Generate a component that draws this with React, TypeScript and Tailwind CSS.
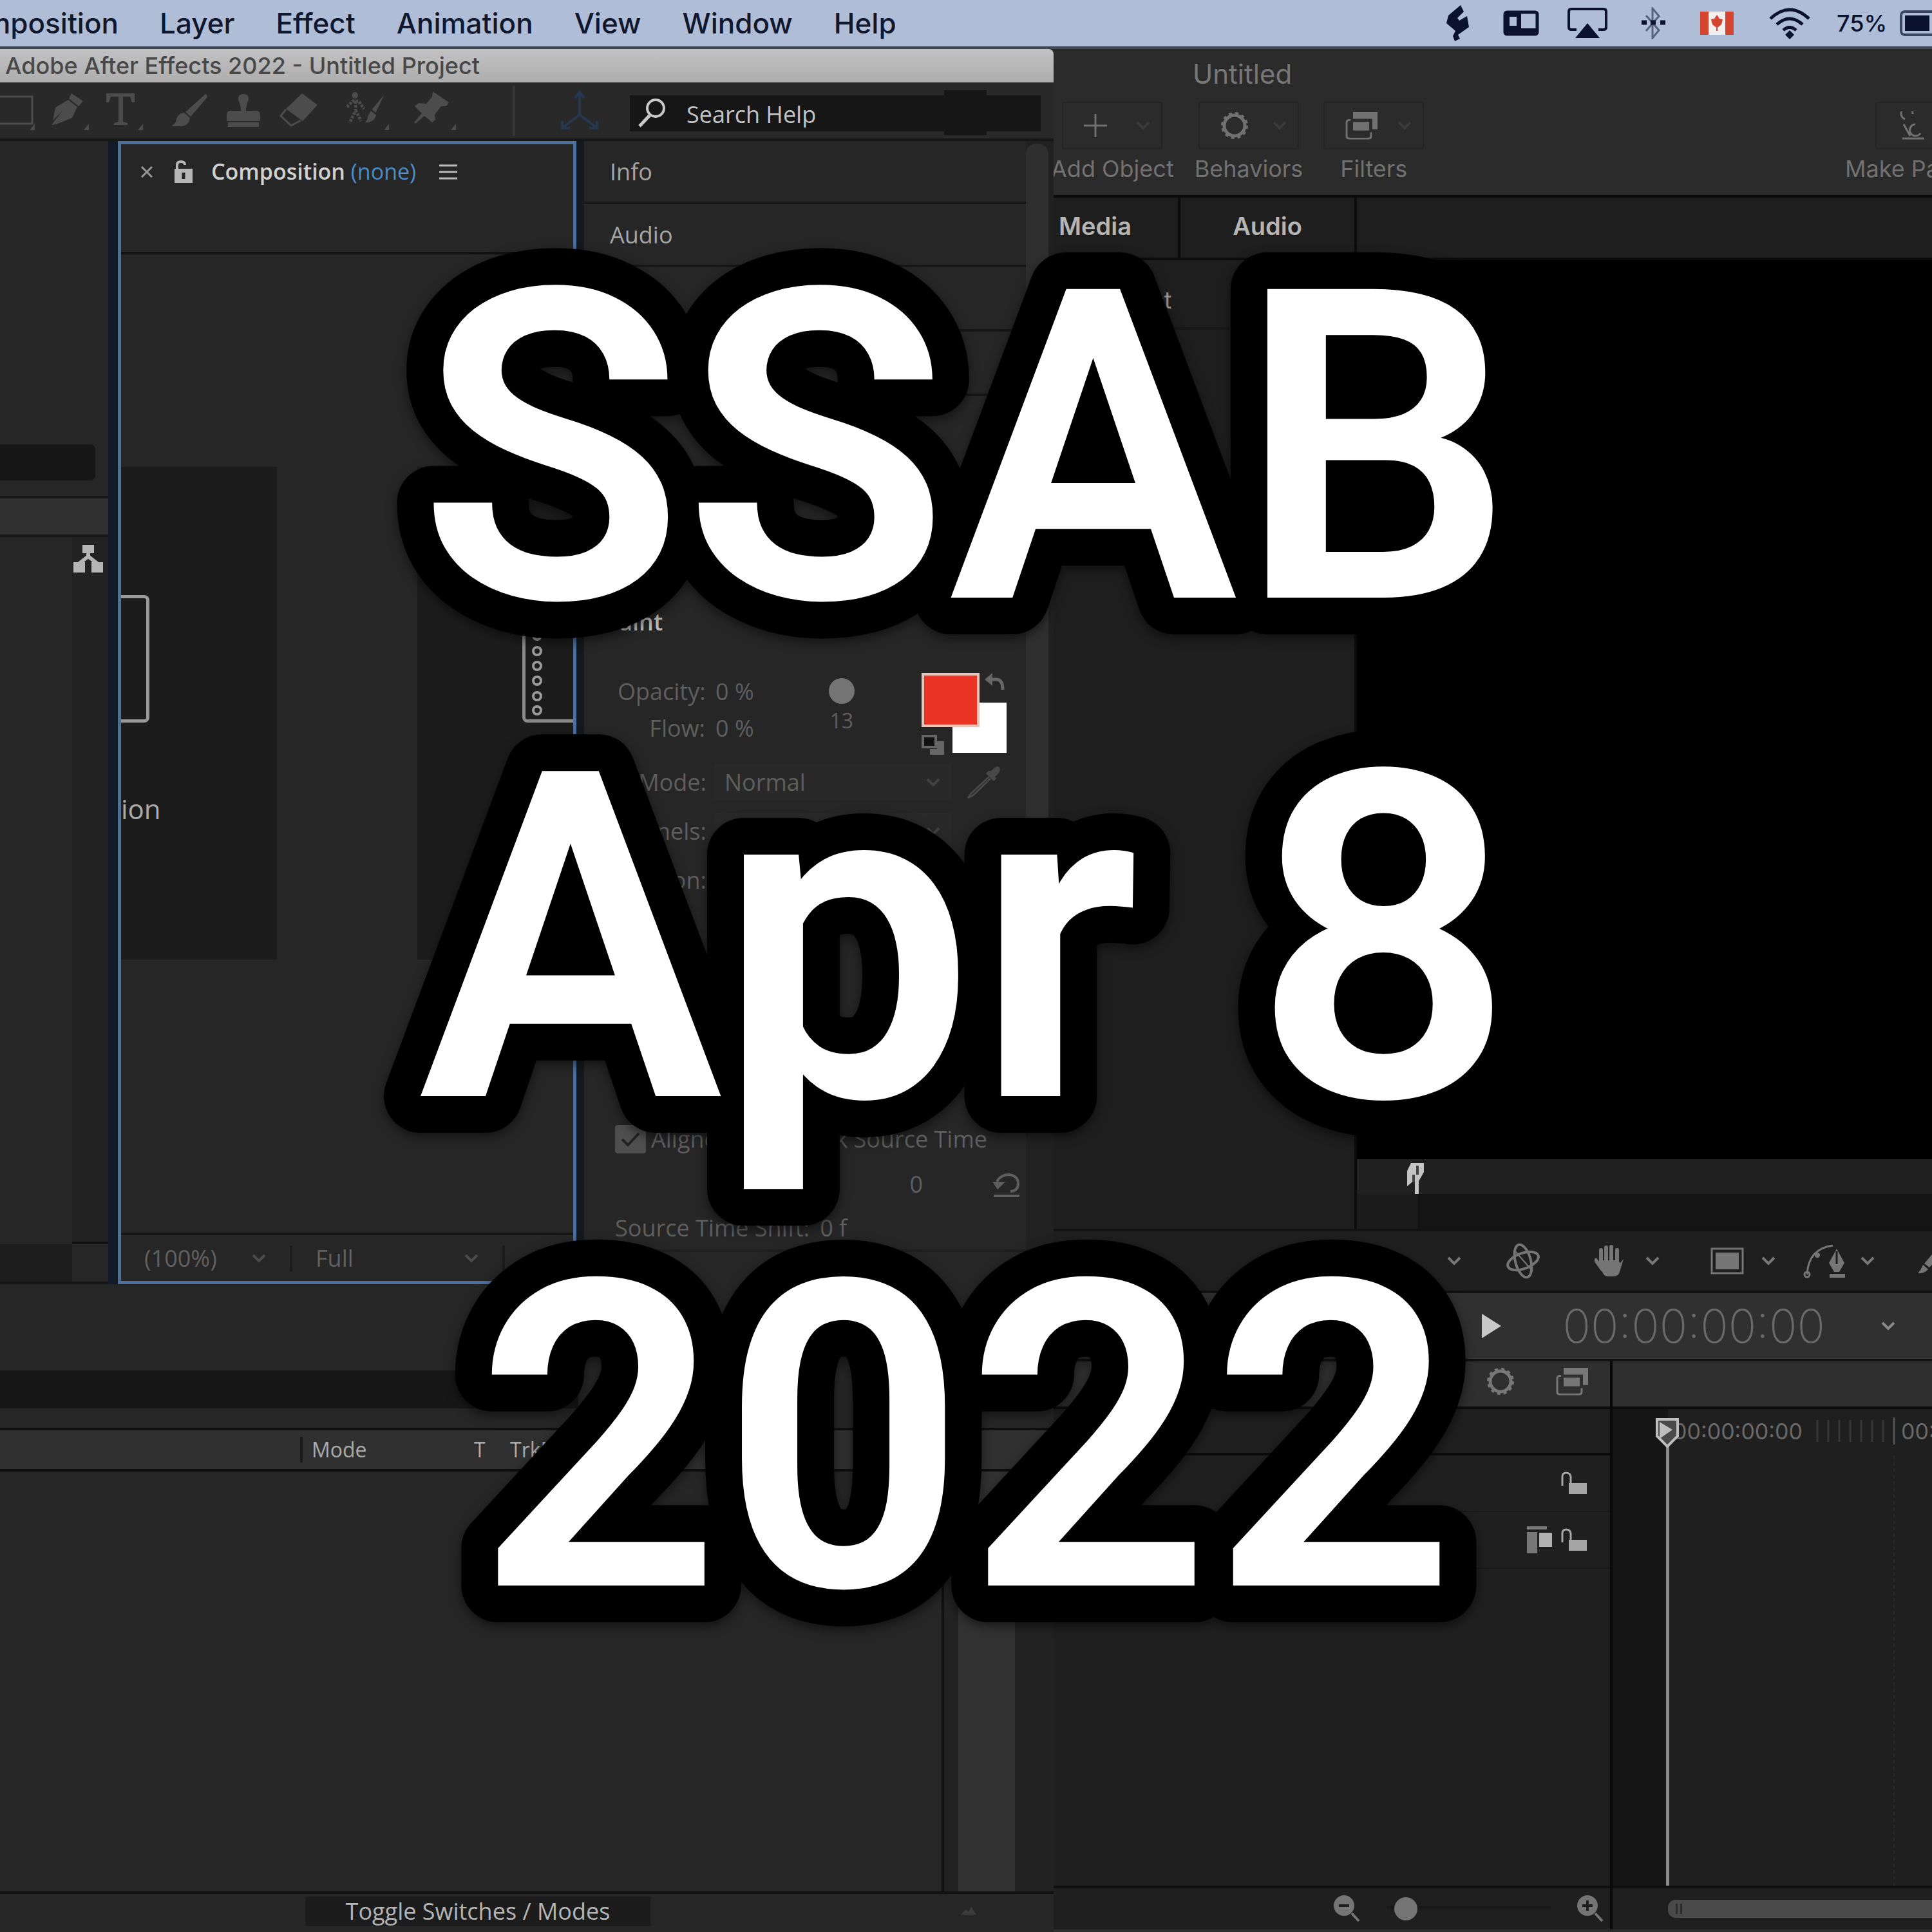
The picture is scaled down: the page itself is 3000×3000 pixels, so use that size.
import type { ReactNode } from "react";

const menus = ["Layer", "Effect", "Animation", "View", "Window", "Help"];

//#region Icons

type IconProps = { className: string; box?: string; children: ReactNode };

function Icon({ className, box = "0 0 24 24", children }: IconProps) {
  return (
    <svg
      aria-hidden="true"
      viewBox={box}
      preserveAspectRatio="none"
      fill="none"
      stroke="currentColor"
      strokeWidth={2}
      className={`shrink-0 ${className}`}
    >
      {children}
    </svg>
  );
}

function Chevron({ className = "text-[#777]" }: { className?: string }) {
  return (
    <Icon className={`w-6 h-4 ${className}`} box="0 0 24 16">
      <path d="M3 3l9 9 9-9" strokeWidth={4} />
    </Icon>
  );
}

function Gear({ className }: { className: string }) {
  return (
    <Icon className={className} box="0 0 44 44">
      <circle cx="22" cy="22" r="16" strokeWidth={5} />
      <circle cx="22" cy="22" r="19" strokeWidth={4} strokeDasharray="5 5" />
    </Icon>
  );
}

function Layers({ className }: { className: string }) {
  return (
    <Icon className={className} box="0 0 52 46">
      <path d="M12 1h38v28h-8V12H12z" fill="currentColor" stroke="none" />
      <path d="M12 17h25v14H12z" fill="currentColor" stroke="none" />
      <path d="M8 14H6q-4 0-4 4v22q0 4 4 4h30q4 0 4-4v-6" strokeWidth={3} />
    </Icon>
  );
}

function OpenLock() {
  return (
    <Icon className="w-10 h-9 text-[#a6a6a6]" box="0 0 40 36">
      <path d="M2 22V8q0-6 6-6t7 6v10" strokeWidth={3} />
      <path d="M12 18h28v17H12z" fill="currentColor" stroke="none" />
    </Icon>
  );
}

function Loupe({ plus = false }: { plus?: boolean }) {
  return (
    <Icon className="w-11 h-11 text-[#757575]" box="0 0 44 44">
      <circle cx="17" cy="17" r="16" fill="currentColor" stroke="none" />
      <path d="M29 29l11 12" strokeWidth={4} />
      <path d="M9 17h16" stroke="#1f1f1f" strokeWidth={4} />
      {plus && <path d="M17 9v16" stroke="#1f1f1f" strokeWidth={4} />}
    </Icon>
  );
}

//#endregion

//#region Menu bar

function MenuBar() {
  return (
    <header className="flex h-[76px] items-center justify-between overflow-hidden border-b-4 border-[#3c485e] bg-[#b0bdd6] text-[44px] text-[#10182f]">
      <nav className="flex items-center gap-16 whitespace-nowrap font-medium font-[Inter,sans-serif]">
        <span className="flex w-[184px] justify-end">
          <a href="#composition">Composition</a>
        </span>
        {menus.map((m) => (
          <a key={m} href={`#${m.toLowerCase()}`}>{m}</a>
        ))}
      </nav>
      <div className="flex shrink-0 items-center text-[#0a1230]">
        <Icon className="mr-[52px] h-14 w-9" box="0 0 36 56">
          <path d="M22 0l5 10-10 10 3 4 12-7 3 17-17 12 3 6-8 4-3-8 4-8L0 28l3-12z" fill="currentColor" stroke="none" />
        </Icon>
        <Icon className="mr-11 h-10 w-14" box="0 0 56 40">
          <rect x="3" y="3" width="50" height="34" rx="3" strokeWidth={5} />
          <path d="M3 3h25v34H3z" fill="currentColor" stroke="none" />
          <path d="M10 10h11v14H10z" fill="#b0bdd6" stroke="none" />
          <path d="M26 28h26v9H26z" fill="currentColor" stroke="none" />
        </Icon>
        <Icon className="mr-[52px] h-12 w-[62px]" box="0 0 62 48">
          <path d="M14 34H6q-4 0-4-4V6q0-4 4-4h50q4 0 4 4v24q0 4-4 4h-8" strokeWidth={4} />
          <path d="M31 24l19 23H12z" fill="currentColor" stroke="none" />
        </Icon>
        <Icon className="mr-[54px] h-[50px] w-[38px] text-[#566280]" box="0 0 38 50">
          <path d="M8 13l20 23-10 12V2l10 12L8 37" strokeWidth={3} />
          <path d="M1 24h8M15 24h8M30 24h8" strokeWidth={7} stroke="#0a1230" />
        </Icon>
        <Icon className="mr-[54px] h-9 w-[52px]" box="0 0 52 36">
          <path d="M0 0h52v36H0z" fill="#f4efee" stroke="none" />
          <path d="M0 0h13v36H0zM39 0h13v36H39zM26 5l4 6 5 1-2 8-5 4h-1v6h-2v-6h-1l-5-4-2-8 5-1z" fill="#d4442f" stroke="none" />
        </Icon>
        <Icon className="mr-10 h-[50px] w-[66px]" box="0 0 66 50">
          <path d="M3 18Q33-10 63 18M13 27q20-18 40 0M23 36q10-9 20 0" strokeWidth={5} />
          <path d="M33 36l7 7-7 7-7-7z" fill="currentColor" stroke="none" />
        </Icon>
        <span className="mr-4 w-[82px] text-4xl font-medium font-[Inter,sans-serif]">75%</span>
        <div className="h-10 w-[50px] rounded-l-lg border-4 border-r-0 border-[#3a4560] p-1">
          <div className="h-full bg-[#0a1230]" />
        </div>
      </div>
    </header>
  );
}

//#endregion

//#region After Effects

function ToolBar() {
  return (
    <div className="flex h-[91px] shrink-0 items-center justify-between border-b-4 border-[#161616] bg-[#292929] pr-5 text-[#4c4c4c]">
      <div className="flex items-center">
        <Icon className="mr-6 h-[60px] w-[54px]" box="0 0 54 60">
          <path d="M-4 8h54v42H-4" strokeWidth={3} />
          <path d="M54 50v10h-8z" fill="currentColor" stroke="none" />
        </Icon>
        <Icon className="mr-6 h-[60px] w-[60px]" box="0 0 60 60">
          <path d="M33 3l18 12-7 8-15-12zM28 13l14 11-8 17-25 10-7 1 17-22-15 15L8 25z" fill="currentColor" stroke="none" />
          <path d="M60 50v10h-8z" fill="currentColor" stroke="none" />
        </Icon>
        <Icon className="mr-11 h-[60px] w-[60px]" box="0 0 60 60">
          <path d="M3 3h44v14h-4l-3-9H29v39l7 2v3H15v-3l7-2V8H10l-3 9H3zM60 50v10h-8z" fill="currentColor" stroke="none" />
        </Icon>
        <Icon className="mr-7 h-[52px] w-14" box="0 0 56 52">
          <path d="M53 0q4 2 2 6L30 35l-8-7zM20 29l9 8q-2 14-17 13-6 1-12-1 7-2 8-10 2-9 12-10z" fill="currentColor" stroke="none" />
        </Icon>
        <Icon className="mr-7 h-[52px] w-14" box="0 0 56 52">
          <path d="M28 0q9 0 8 9-4 8-4 17h16q6 0 6 7v9H2v-9q0-7 6-7h16q0-9-4-17-1-9 8-9zM4 44h48v7H4z" fill="currentColor" stroke="none" />
        </Icon>
        <Icon className="mr-11 h-[54px] w-[60px]" box="0 0 60 54">
          <path d="M35 0l24 18-23 25-26-19z" fill="currentColor" stroke="none" />
          <path d="M10 25L2 35l16 15 15-8" strokeWidth={3} />
        </Icon>
        <Icon className="mr-9 h-[60px] w-[68px]" box="0 0 72 60">
          <circle cx="14" cy="6" r="5" fill="currentColor" stroke="none" />
          <path d="M1 24l9-9h10l9 12M15 15v15L5 49M15 29l9 17" strokeWidth={5} strokeDasharray="4 2" />
          <path d="M62 5L42 28l6 5zM40 30l9 7q-5 13-19 11 5-3 5-9zM70 50v10h-8z" fill="currentColor" stroke="none" />
        </Icon>
        <Icon className="h-[60px] w-[66px]" box="0 0 66 60">
          <path d="M30 0l25 17-4 6h-8L33 36l1 8-5 4-12-10L3 50l-2-2 12-14L2 23l6-5 12 1 9-11zM66 50v10h-8z" fill="currentColor" stroke="none" />
        </Icon>
        <div className="ml-[88px] h-[78px] w-1 bg-[#363636]" />
        <Icon className="ml-[66px] h-16 w-[68px] text-[#26384f]" box="0 0 68 64">
          <path d="M34 4v34L8 58M34 38l26 20M27 12l7-9 7 9M7 48v11h12M61 48v11H49" strokeWidth={4} />
        </Icon>
      </div>
      <label className="relative ml-11 mt-2 flex h-[56px] min-w-0 flex-1 items-center gap-8 bg-[#161616] pl-3">
        {/* Sync button behind the field */}
        <span className="absolute -top-2 right-[84px] h-[70px] w-[66px] bg-[#161616]" />
        <Icon className="relative h-12 w-11 text-[#c9c9c9]" box="0 0 44 48">
          <circle cx="28" cy="16" r="13" strokeWidth={4} />
          <path d="M19 27L3 44" strokeWidth={5} />
        </Icon>
        <input
          type="text"
          defaultValue="Search Help"
          aria-label="Search Help"
          className="relative min-w-0 flex-1 bg-transparent pt-1 text-4xl text-[#c4c4c4] outline-none"
        />
      </label>
    </div>
  );
}

function ProjectPanel() {
  return (
    <section className="flex min-w-0 flex-col border-r-[15px] border-[#111a26]">
      <div className="h-[471px]" />
      <input type="search" aria-label="Search project" className="mr-5 h-14 min-w-0 rounded-r-lg bg-[#171717]" />
      <div className="mt-6 h-16 border-y-4 border-[#171717] bg-[#313131]" />
      <div className="flex flex-1 justify-end">
        <div className="flex w-[56px] flex-col items-end border-b-4 border-[#111] bg-[#222] pt-3">
          <Icon className="mr-2 h-11 w-[46px] text-[#b5b5b5]" box="0 0 46 44">
            <path d="M14 0h18v13H14zM0 27h18v16H0zM28 27h18v16H28z" fill="currentColor" stroke="none" />
            <path d="M23 13v8M23 18L9 29M23 18l14 11" strokeWidth={6} />
          </Icon>
        </div>
      </div>
      <div className="flex h-[62px] border-b-4 border-[#161616]">
        <div className="flex-1 bg-[#1d1d1d]" />
        <div className="w-[56px]" />
      </div>
    </section>
  );
}

function Select({ label, value, className }: { label: string; value: string; className: string }) {
  return (
    <div className={`flex items-center justify-between pr-9 ${className}`}>
      <select aria-label={label} className="min-w-0 appearance-none bg-transparent outline-none">
        <option>{value}</option>
      </select>
      <Chevron className="text-[#4b4b4b]" />
    </div>
  );
}

function CompositionPanel() {
  return (
    <section className="flex min-w-0 flex-col border-[5px] border-[#4d709f]">
      <div className="flex h-[85px] items-center pl-[30px] text-[34px]">
        <button type="button" aria-label="Close" className="text-[#999]">
          <Icon className="h-5 w-5" box="0 0 20 20">
            <path d="M2 2l16 16M18 2L2 18" strokeWidth={3} />
          </Icon>
        </button>
        <Icon className="ml-8 h-9 w-[30px] text-[#b5b5b5]" box="0 0 30 36">
          <path d="M5 14V7q0-5 6-5t6 5" strokeWidth={4} />
          <path d="M1 13h28v22H1z" fill="currentColor" stroke="none" />
          <path d="M15 19v10" stroke="#262626" strokeWidth={5} />
        </Icon>
        <h2 className="ml-7 whitespace-nowrap font-semibold text-[#d0d0d0]">
          Composition <span className="font-medium text-[#4b8cc8]">(none)</span>
        </h2>
        <Icon className="ml-9 h-6 w-7 text-[#bbb]" box="0 0 28 24">
          <path d="M0 2h28M0 12h28M0 22h28" strokeWidth={3} />
        </Icon>
      </div>
      <div className="h-[86px] border-b-4 border-[#121212]" />
      <div className="flex flex-1 items-start justify-between pt-[330px]">
        <div className="h-[765px] w-[242px] bg-[#1c1c1c] pt-[199px]">
          <div className="h-[198px] w-11 rounded-r-lg border-[5px] border-l-0 border-[#9a9a9a]" />
          <div className="pt-[104px] text-[42px] leading-[60px] text-[#ababab]">ion</div>
        </div>
        <div className="flex h-[765px] w-[242px] justify-end bg-[#1c1c1c] pt-[199px]">
          <div className="h-[198px] w-[79px] rounded-l-lg border-[5px] border-r-0 border-[#8a8a8a]">
            <Icon className="ml-2 h-full w-5 text-[#999]" box="0 0 20 188">
              {[10, 34, 58, 82, 105, 128, 152, 174].map((y) => (
                <circle key={y} cx="10" cy={y} r="6" strokeWidth={4} />
              ))}
            </Icon>
          </div>
        </div>
      </div>
      <div className="flex h-[75px] items-center border-t-4 border-[#161616] text-4xl text-[#606060]">
        <Select label="Magnification" value="(100%)" className="w-[262px] pl-9" />
        <div className="h-10 w-1 bg-[#1b1b1b]" />
        <Select label="Resolution" value="Full" className="w-[326px] pl-9" />
        <div className="h-10 w-1 bg-[#1b1b1b]" />
      </div>
    </section>
  );
}

function Swatches() {
  return (
    <div className="grid w-[132px] grid-cols-[90px_42px] grid-rows-[46px_38px_40px] text-[#666]">
      <div className="z-10 col-start-1 row-span-2 row-start-1 border-4 border-[#e6c4bc] bg-[#e93323]" />
      <Icon className="ml-2 h-8 w-8" box="0 0 32 32">
        <path d="M4 10h14q10 0 10 16" strokeWidth={5} />
        <path d="M12 0v20L0 10z" fill="currentColor" stroke="none" />
      </Icon>
      <div className="col-start-1 col-end-3 row-start-2 row-end-4 ml-12 bg-white" />
      <Icon className="col-start-1 row-start-3 mt-3 h-8 w-9" box="0 0 36 32">
        <path d="M2 2h20v17H2z" fill="#111" strokeWidth={4} />
        <path d="M24 10h11v21H13V22h11z" fill="currentColor" stroke="none" />
      </Icon>
    </div>
  );
}

function PanelColumn() {
  return (
    <div className="flex min-w-0 border-l-[12px] border-[#15181d]">
      <div className="flex min-w-0 flex-1 flex-col text-4xl text-[#5e5e5e]">
        {["Info", "Audio"].map((name) => (
          <h3 key={name} className="h-[98px] shrink-0 border-b-4 border-[#171717] pl-10 text-[#a5a5a5] leading-[96px]">
            {name}
          </h3>
        ))}
        <div className="h-[100px] shrink-0 border-b-4 border-[#171717]" />
        <div className="h-[100px] shrink-0 border-b-4 border-[#171717]" />
        <div className="h-[304px] shrink-0" />
        <h3 className="h-[126px] shrink-0 pl-8 font-semibold text-[#bdbdbd] leading-[94px]">Paint</h3>
        <div className="flex h-[132px] shrink-0 gap-[76px] pl-[52px]">
          <dl className="grid shrink-0 auto-rows-[57px] grid-cols-[136px_auto] gap-x-4 whitespace-nowrap leading-[57px]">
            <dt className="text-right">Opacity:</dt>
            <dd>0 %</dd>
            <dt className="text-right">Flow:</dt>
            <dd>0 %</dd>
          </dl>
          <div className="ml-10 mr-[28px] w-10 pt-2 text-center text-[32px] leading-[52px]">
            <div className="h-10 w-10 rounded-full bg-[#747474]" />
            13
          </div>
          <Swatches />
        </div>
        <div className="grid shrink-0 auto-rows-[76px] grid-cols-[190px_368px_auto] items-center gap-x-3">
          <label htmlFor="mode" className="text-right">Mode:</label>
          <div className="flex h-14 items-center justify-between bg-[#292929] px-4">
            <select id="mode" className="appearance-none bg-transparent outline-none">
              <option>Normal</option>
            </select>
            <Chevron className="text-[#424242]" />
          </div>
          <Icon className="ml-3 h-[52px] w-[52px] text-[#484848]" box="0 0 52 52">
            <path d="M35 17L7 43l-5 7 8-4 27-26" strokeWidth={3} />
            <path d="M38 8q10-11 13-5t-7 14l2 3-4 4-12-12 4-4z" fill="currentColor" stroke="none" />
          </Icon>
          <label htmlFor="channels" className="text-right">Channels:</label>
          <div className="col-span-2 flex h-14 w-[368px] items-center justify-between bg-[#292929] px-4">
            <select id="channels" className="w-[200px] appearance-none bg-transparent outline-none" />
            <Chevron className="text-[#424242]" />
          </div>
          <label htmlFor="duration" className="text-right">Duration:</label>
          <select id="duration" className="col-span-2 h-14 w-[368px] appearance-none bg-[#292929] px-4 outline-none" />
        </div>
        <div className="flex-1" />
        <div className="flex h-[70px] shrink-0 items-center justify-between whitespace-nowrap pl-12 pr-[60px]">
          <label className="flex items-center gap-2">
            <span className="grid h-11 w-12 place-items-center rounded bg-[#4f4f4f]">
              <input type="checkbox" defaultChecked className="col-start-1 row-start-1 h-11 w-12 appearance-none" />
              <Icon className="pointer-events-none col-start-1 row-start-1 h-6 w-8 text-[#222]" box="0 0 32 24">
                <path d="M3 12l9 9L29 3" strokeWidth={4} />
              </Icon>
            </span>
            Aligned
          </label>
          <span>Lock Source Time</span>
        </div>
        <div className="flex h-[70px] shrink-0 items-center justify-end pr-2">
          <span className="mr-[110px]">0 ,</span>
          <span className="mr-[108px]">0</span>
          <Icon className="h-10 w-11" box="0 0 44 40">
            <path d="M8 16V14q6-9 18-9 14 2 14 14 0 11-12 12M2 38h40" strokeWidth={4} />
            <path d="M0 16h20L8 28z" fill="currentColor" stroke="none" />
          </Icon>
        </div>
        <div className="flex h-[66px] shrink-0 items-center gap-4 whitespace-nowrap pl-12">
          <span>Source Time Shift:</span>
          <span>0 f</span>
        </div>
        <div className="h-[54px] shrink-0 border-t-4 border-[#202020] bg-[#262626]" />
      </div>
      <div className="flex w-[43px] shrink-0 flex-col bg-[#212121] pr-2 pt-1">
        <div className="flex-1 rounded-t-2xl bg-[#2f2f2f]" />
        <div className="h-[420px]" />
      </div>
    </div>
  );
}

function TimelinePanel() {
  return (
    <section className="flex min-w-0 flex-col">
      <div className="flex h-[223px] flex-col justify-end pb-[30px]">
        <input type="search" aria-label="Search layers" className="h-[59px] w-[898px] max-w-full bg-[#171717]" />
      </div>
      <div className="flex h-[68px] shrink-0 items-center border-y-4 border-[#0f0f0f] bg-[#303030] text-[32px] text-[#aaa]">
        <span className="w-[466px]" />
        <span className="w-[270px] border-l-4 border-[#1a1a1a] pl-[14px] leading-[40px]">Mode</span>
        <span className="w-[56px]">T</span>
        <span>TrkMat</span>
      </div>
      <div className="flex flex-1">
        <div className="flex-1 border-r-4 border-[#101010]" />
        <div className="w-[170px] bg-[#222] pl-[22px] pr-[60px]">
          <div className="h-full bg-[#323232]" />
        </div>
      </div>
      <div className="flex h-[63px] shrink-0 items-start justify-between border-t-4 border-[#101010] pl-[474px] pr-[120px] pt-1">
        <button type="button" className="h-[46px] w-[536px] bg-[#1c1c1c] text-4xl text-[#b4b4b4] leading-[46px]">
          Toggle Switches / Modes
        </button>
        <Icon className="mt-4 h-3 w-6 text-[#3d3d3d]" box="0 0 24 12">
          <path d="M0 12l8-8 4 4 4-8 8 12z" fill="currentColor" stroke="none" />
        </Icon>
      </div>
    </section>
  );
}

function AfterEffects() {
  return (
    <div className="flex min-w-0 flex-col overflow-hidden bg-[#262626] font-['Open_Sans',sans-serif]">
      <h1 className="h-[52px] shrink-0 overflow-hidden whitespace-nowrap rounded-tr-lg bg-linear-to-b from-[#c2c2c4] to-[#adadad] text-4xl font-medium text-[#484848] leading-[52px] font-[Inter,sans-serif]">
        <span className="flex w-[745px] justify-end">Adobe After Effects 2022 - Untitled Project</span>
      </h1>
      <ToolBar />
      <div className="grid grow-[1775] basis-0 grid-cols-[183fr_712fr_741fr]">
        <ProjectPanel />
        <CompositionPanel />
        <PanelColumn />
      </div>
      <div className="grid grow-[1006] basis-0">
        <TimelinePanel />
      </div>
    </div>
  );
}

//#endregion

//#region Motion

function ToolButton({ label, children }: { label: string; children: ReactNode }) {
  return (
    <button type="button" className="flex flex-col items-center text-4xl leading-[60px] text-[#717171]">
      <span className="flex h-[74px] w-[156px] items-center justify-between rounded border-2 border-[#242424] pl-8 pr-4">
        {children}
        <Chevron className="text-[#3a3a3a]" />
      </span>
      {label}
    </button>
  );
}

function MotionToolBar() {
  return (
    <div className="flex h-[231px] shrink-0 flex-col overflow-hidden border-b-4 border-[#0c0c0c] bg-[#2b2b2b]">
      <h2 className="pl-[216px] pt-1 text-[42px] leading-[70px] text-[#777]">Untitled</h2>
      <div className="mt-2 flex justify-between overflow-hidden whitespace-nowrap">
        <div className="flex gap-8">
          <div className="-ml-1">
            <ToolButton label="Add Object">
              <Icon className="h-9 w-9" box="0 0 36 36">
                <path d="M18 0v36M0 18h36" strokeWidth={3} />
              </Icon>
            </ToolButton>
          </div>
          <ToolButton label="Behaviors">
            <Gear className="h-11 w-11" />
          </ToolButton>
          <ToolButton label="Filters">
            <Layers className="h-11 w-[52px]" />
          </ToolButton>
        </div>
        <div className="flex w-[135px] justify-start">
          <ToolButton label="Make Particles">
            <Icon className="h-11 w-11" box="0 0 44 44">
              <path d="M12 12a9 9 0 1 1 12-8M28 20a9 9 0 1 0 8 14M8 42h34M10 20l10 18" strokeWidth={3} />
            </Icon>
          </ToolButton>
        </div>
      </div>
    </div>
  );
}

function CanvasTools() {
  return (
    <div className="flex h-[100px] shrink-0 items-center justify-end overflow-hidden border-y-4 border-[#121212] bg-[#1f1f1f] text-[#757575]">
      <Chevron />
      <Icon className="ml-[68px] h-14 w-[54px]" box="0 0 54 56">
        <ellipse cx="27" cy="28" rx="12" ry="26" strokeWidth={4} transform="rotate(-15 27 28)" />
        <ellipse cx="27" cy="28" rx="25" ry="12" strokeWidth={4} transform="rotate(-20 27 28)" />
        <path d="M14 12l28 32" strokeWidth={2} />
      </Icon>
      <Icon className="ml-[84px] h-[50px] w-[46px]" box="0 0 46 50">
        <path d="M10 8v22M18 4v24M26 3v24M35 8v24M2 24l10 14" strokeWidth={6} strokeLinecap="round" />
        <path d="M8 24h28l4 4 5-6-6 20q-2 7-9 7H20q-5 0-8-7L5 30z" fill="currentColor" stroke="none" />
      </Icon>
      <span className="ml-8"><Chevron /></span>
      <Icon className="ml-[78px] h-[42px] w-[52px]" box="0 0 52 42">
        <path d="M2 2h48v38H2z" strokeWidth={3} />
        <path d="M8 8h36v26H8z" fill="currentColor" stroke="none" />
      </Icon>
      <span className="ml-[26px]"><Chevron /></span>
      <Icon className="ml-[42px] h-[54px] w-[66px]" box="0 0 66 54">
        <path d="M6 48Q8 8 46 3" strokeWidth={3} />
        <circle cx="6" cy="48" r="4" strokeWidth={3} />
        <circle cx="22" cy="18" r="4" fill="currentColor" stroke="none" />
        <path d="M52 8l12 22-8 14h-8l-8-14zM41 47h24v6H41z" fill="currentColor" stroke="none" />
        <path d="M52 12v20" stroke="#1f1f1f" strokeWidth={3} />
      </Icon>
      <span className="ml-[22px]"><Chevron /></span>
      <Icon className="ml-[66px] h-10 w-[22px]" box="0 0 22 40">
        <path d="M22 10L10 24l8 6 4-4zM8 26l8 7Q10 40 0 39q4-4 8-13z" fill="currentColor" stroke="none" />
      </Icon>
    </div>
  );
}

function Ruler() {
  return (
    <div className="flex min-w-0 flex-1 overflow-hidden">
      <div className="w-[86px] shrink-0 bg-[#151515]" />
      <div className="min-w-0 flex-1 overflow-hidden bg-[#1f1f1f]">
        <div className="flex h-[72px] items-start whitespace-nowrap pl-2 pt-[13px] text-[34px] leading-[44px] text-[#696969]">
          <span className="w-[200px]">00:00:00:00</span>
          <Icon className="ml-5 mr-1 h-[42px] w-[130px] text-[#363636]" box="0 0 130 42">
            <path d="M4 4v34M21 4v34M38 4v34M55 4v34M72 4v34M89 4v34M106 4v34" strokeWidth={3} />
            <path d="M123 0v42" stroke="#555" strokeWidth={3} />
          </Icon>
          00:00:00:10
        </div>
        <div className="ml-[350px] h-full border-l-2 border-dashed border-[#292929]" />
      </div>
    </div>
  );
}

function MotionTimeline() {
  return (
    <section className="flex flex-1 flex-col">
      <div className="flex h-[106px] shrink-0 items-center justify-end border-b-4 border-[#111] bg-[#303030] pr-14 text-[#6a6a6a]">
        <Icon className="mr-[94px] h-10 w-8 text-[#c8c8c8]" box="0 0 32 40">
          <path d="M1 1l30 19L1 39z" fill="currentColor" stroke="none" />
        </Icon>
        <span className="mr-[86px] text-[72px] font-extralight leading-[90px]">00:00:00:00</span>
        <Chevron className="text-[#8a8a8a]" />
      </div>
      <div className="grid flex-1 grid-cols-[868fr_496fr]">
        <div className="flex min-w-0 flex-col border-r-4 border-[#080808] bg-[#1f1f1f]">
          <div className="flex h-[74px] items-center justify-end gap-16 border-b-4 border-[#0c0c0c] bg-[#2f2f2f] pb-2 pr-8 text-[#777]">
            <Gear className="h-11 w-11" />
            <Layers className="h-11 w-[52px]" />
          </div>
          <div className="h-[72px] border-b-4 border-[#0c0c0c]" />
          <div className="flex h-[88px] items-center justify-end border-b-2 border-[#191919] pr-9">
            <OpenLock />
          </div>
          <div className="flex h-[88px] items-center justify-end gap-[14px] border-b-2 border-[#191919] pr-9">
            <Icon className="h-11 w-10 text-[#777]" box="0 0 40 44">
              <path d="M1 1h31v5H1zM1 10h16v33H1z" fill="currentColor" stroke="none" />
              <path d="M20 11h20v22H20z" fill="#b0b0b0" stroke="none" />
            </Icon>
            <OpenLock />
          </div>
          <div className="flex-1" />
          <div className="flex h-[68px] items-center justify-end border-t-4 border-[#0f0f0f] pr-2">
            <Loupe />
            <input
              type="range"
              aria-label="Zoom"
              min={0}
              max={100}
              defaultValue={5}
              className="mx-10 h-9 w-[254px] appearance-none bg-linear-to-b from-transparent from-40% via-[#171717] via-40% to-transparent to-60% [&::-webkit-slider-thumb]:h-9 [&::-webkit-slider-thumb]:w-9 [&::-webkit-slider-thumb]:appearance-none [&::-webkit-slider-thumb]:rounded-full [&::-webkit-slider-thumb]:bg-[#757575]"
            />
            <Loupe plus />
          </div>
        </div>
        <div className="relative flex min-w-0 flex-col">
          <div className="h-[74px] border-b-4 border-[#0c0c0c] bg-[#2f2f2f]" />
          <Ruler />
          <div className="flex h-[68px] items-center border-t-4 border-[#0f0f0f] bg-[#1f1f1f] pl-[86px]">
            <div className="flex h-7 flex-1 items-center gap-1 rounded-l-xl bg-[#4a4a4a] pl-3">
              <span className="h-4 w-[3px] bg-[#2b2b2b]" />
              <span className="h-4 w-[3px] bg-[#2b2b2b]" />
            </div>
          </div>
          {/* Playhead */}
          <div className="absolute bottom-[68px] left-[83px] top-[126px] w-[5px] bg-[#8c8c8c]" />
          <Icon className="absolute left-[67px] top-[88px] h-[46px] w-[36px] text-[#bdbdbd]" box="0 0 36 46">
            <path d="M2 2h32v26L18 44 2 28z" fill="#4a4a4a" strokeWidth={4} />
            <path d="M6 6v26l20-14z" fill="currentColor" stroke="none" />
          </Icon>
        </div>
      </div>
      <div className="h-1 shrink-0 bg-[#2d2d2d]" />
    </section>
  );
}

function Motion() {
  return (
    <div className="flex min-w-0 flex-col bg-[#1e1e1e] font-[Inter,sans-serif]">
      <MotionToolBar />
      <div className="flex h-[97px] shrink-0 border-b-4 border-[#0c0c0c] text-[38px] font-semibold leading-[88px] text-[#b5b5b5]">
        <div className="w-[197px] border-r-4 border-[#0c0c0c] pl-2">Media</div>
        <div className="w-[274px] border-r-4 border-[#0c0c0c] text-center">Audio</div>
      </div>
      <div className="flex h-[1504px] shrink-0">
        <div className="w-[471px] shrink-0 border-r-4 border-[#0c0c0c]">
          <div className="h-[108px] border-b-4 border-[#181818] pl-16 text-4xl leading-[124px] text-[#999]">
            Project
          </div>
        </div>
        <div className="flex min-w-0 flex-1 flex-col">
          <div className="flex-1 bg-black" />
          <div className="h-[54px] bg-[#202020] pl-[76px] pt-1">
            <Icon className="h-[50px] w-8 text-[#c4c4c4]" box="0 0 32 50">
              <path d="M8 2h20v14l-8 14v20h-6V28L2 38V14z" fill="currentColor" stroke="none" />
              <path d="M18 6v14M12 20v12" stroke="#444" strokeWidth={4} />
            </Icon>
          </div>
          <div className="h-[54px] bg-[#1c1c1c] pl-[94px]">
            <div className="h-full bg-[#141414]" />
          </div>
        </div>
      </div>
      <CanvasTools />
      <MotionTimeline />
    </div>
  );
}

//#endregion

export default function App() {
  return (
    <div className="relative grid min-h-screen grid-rows-[auto_1fr] overflow-hidden bg-black">
      <MenuBar />
      <main className="grid grid-cols-[1636fr_1364fr] bg-[#2b2b2b]">
        <AfterEffects />
        <Motion />
      </main>
      {/* Title card over both windows */}
      <svg
        viewBox="0 0 3000 3000"
        className="pointer-events-none absolute inset-0 h-full w-full drop-shadow-[0_6px_8px_rgba(0,0,0,0.5)]"
      >
        <g
          textAnchor="middle"
          fill="white"
          stroke="black"
          strokeWidth={114}
          strokeLinejoin="round"
          paintOrder="stroke"
          className="font-semibold font-[Roboto,sans-serif]"
        >
          <text x="1500" y="928" fontSize="674">SSAB</text>
          <text x="1500" y="1702" fontSize="710">Apr 8</text>
          <text x="1500" y="2462" fontSize="666">2022</text>
        </g>
      </svg>
    </div>
  );
}
